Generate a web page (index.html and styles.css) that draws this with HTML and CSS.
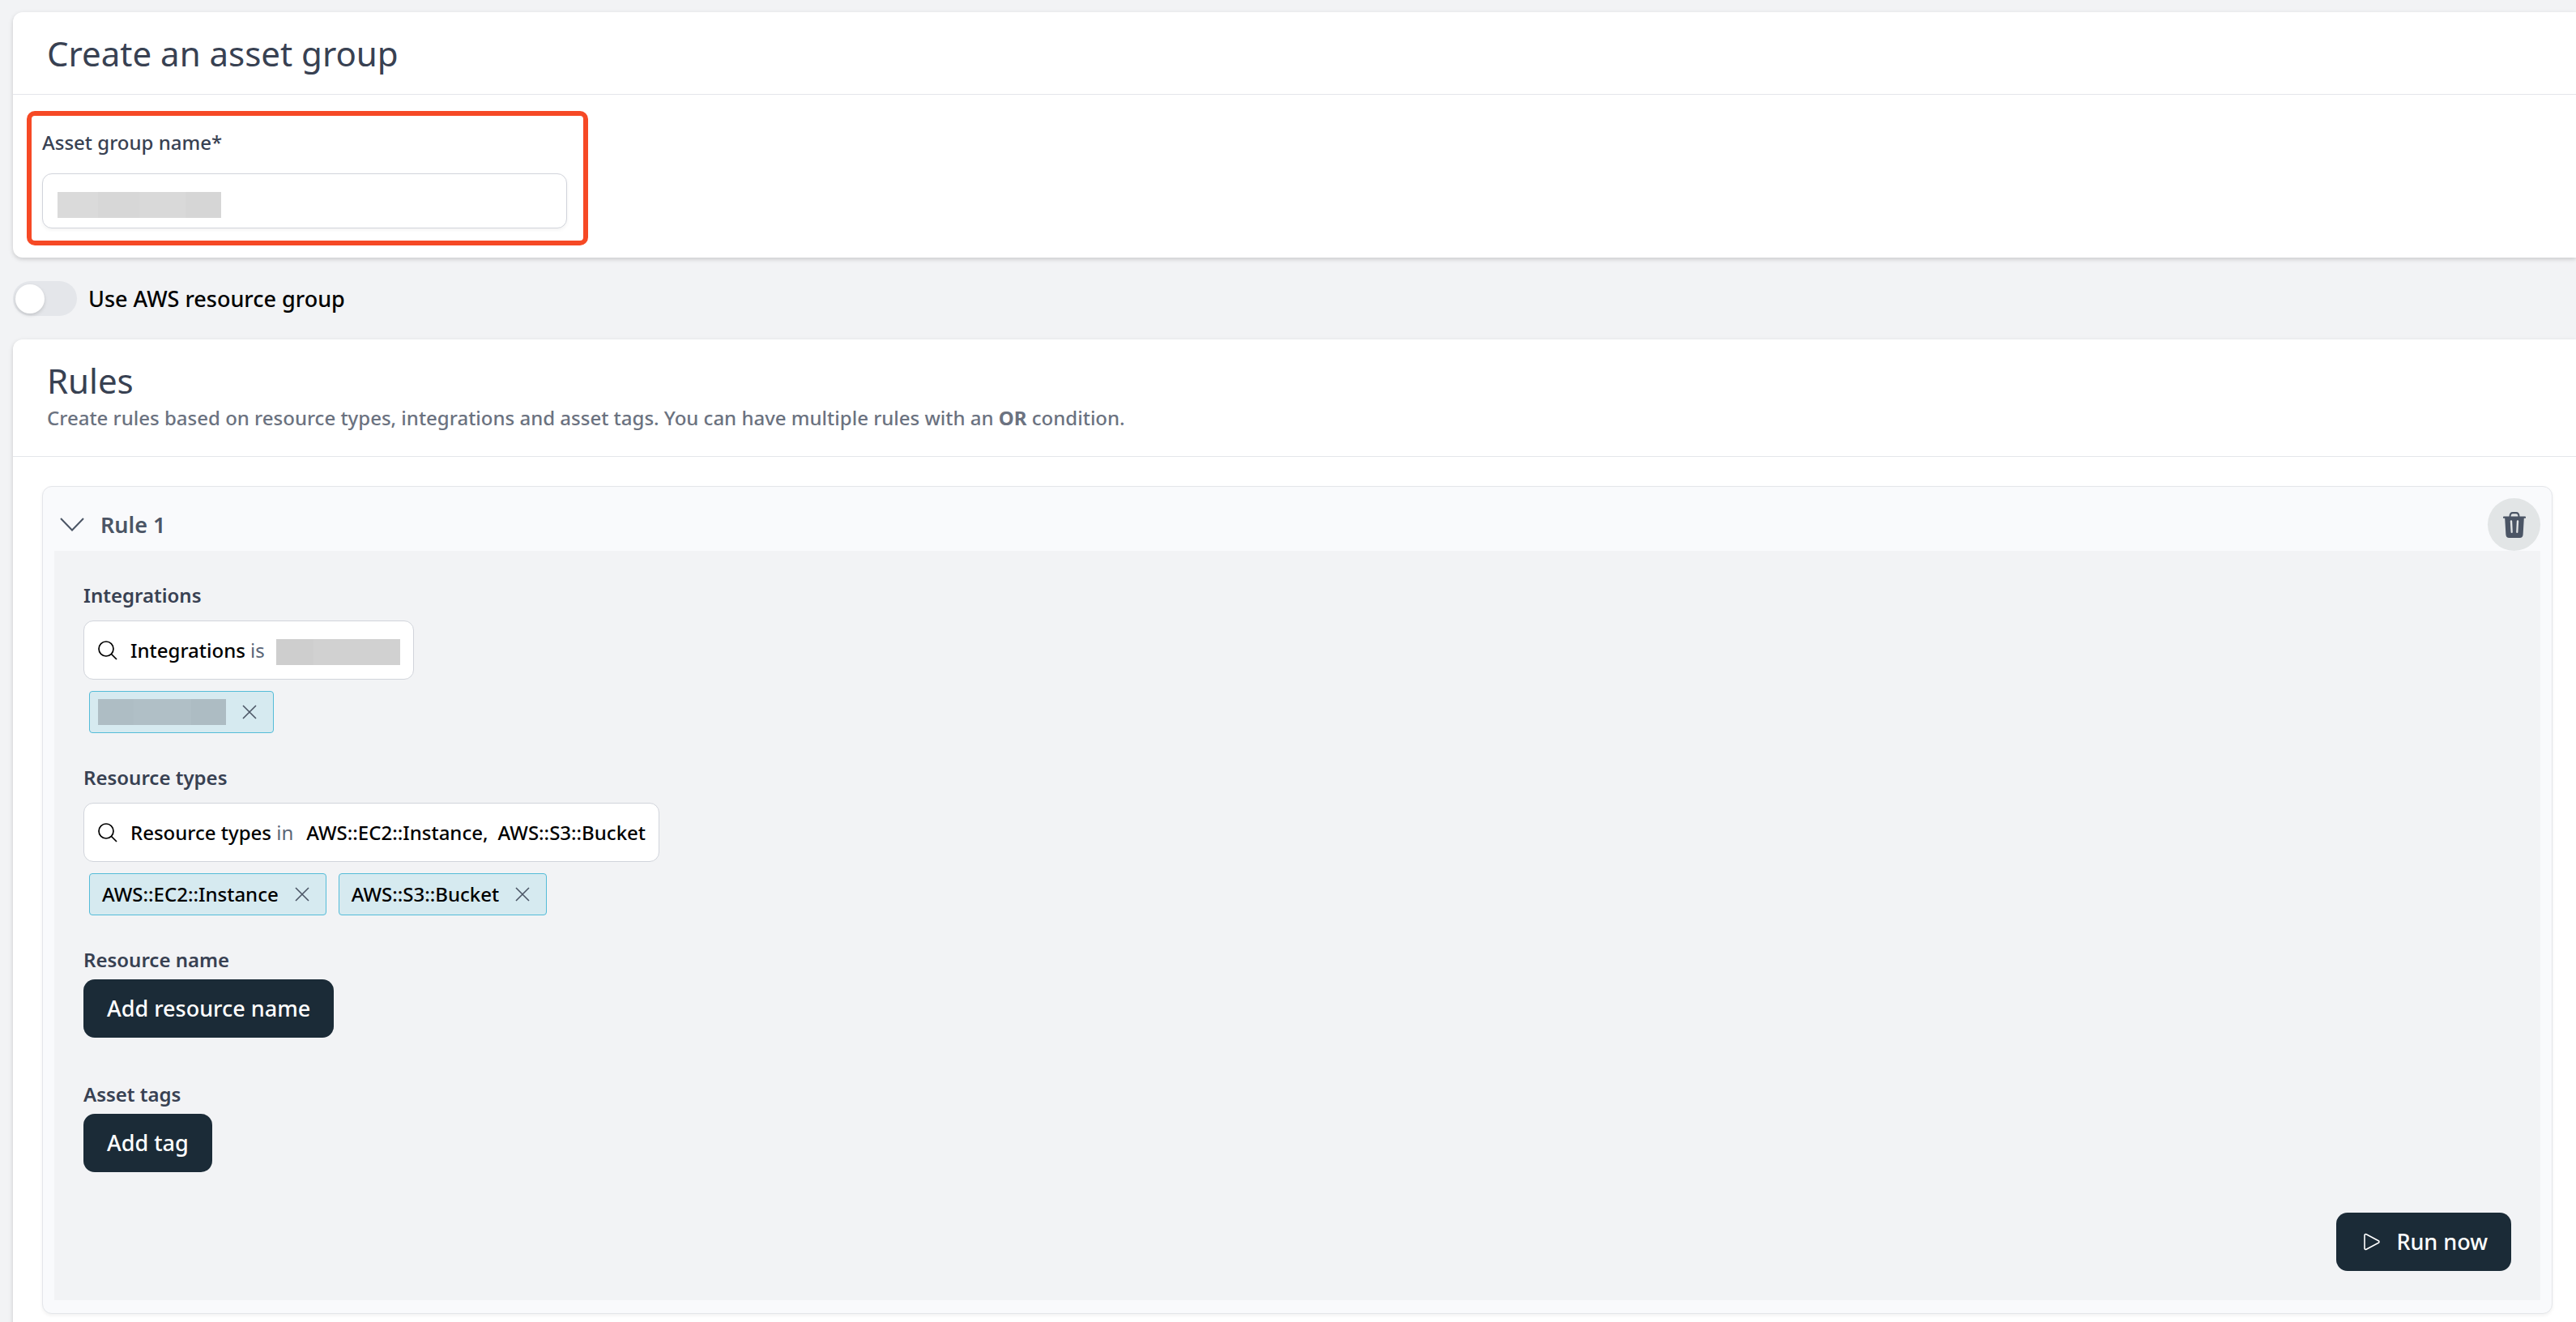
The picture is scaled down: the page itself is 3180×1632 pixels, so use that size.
FILE: index.html
```html
<!DOCTYPE html>
<html lang="en">
<head>
<meta charset="utf-8">
<meta name="viewport" content="width=device-width, initial-scale=1">
<title>Create an asset group</title>
<link rel="stylesheet" href="styles.css">
</head>
<body>
<svg class="sprite" aria-hidden="true">
  <symbol id="icon-search" viewBox="0 0 24 24"><circle cx="10" cy="10" r="9"/><path d="M16.5 16.5 23 23"/></symbol>
  <symbol id="icon-close" viewBox="0 0 18 18"><path d="M1 1l16 16M17 1 1 17"/></symbol>
</svg>
<main class="page">
  <section class="card">
    <header class="card-header">
      <h1 class="title">Create an asset group</h1>
    </header>
    <div class="name-area">
      <div class="highlight">
        <label class="label" for="group-name">Asset group name*</label>
        <div class="text-field">
          <input class="text-input" id="group-name" type="text">
          <span class="redacted redacted-name"></span>
        </div>
      </div>
    </div>
  </section>

  <div class="switch-row">
    <input class="switch" id="use-aws" type="checkbox">
    <label class="switch-label" for="use-aws">Use AWS resource group</label>
  </div>

  <section class="card card-rules">
    <header class="card-header card-header-rules">
      <h2 class="title">Rules</h2>
      <p class="subtitle">Create rules based on resource types, integrations and asset tags. You can have multiple rules with an <strong>OR</strong> condition.</p>
    </header>
    <div class="rules">
      <article class="rule">
        <div class="rule-bar">
          <button class="rule-toggle" type="button" aria-expanded="true">
            <svg class="chevron" viewBox="0 0 32 18"><path d="M2 1 16 15.500 30 1"/></svg>
            Rule 1
          </button>
          <button class="delete" type="button" aria-label="Delete rule">
            <svg class="trash" viewBox="0 0 28 32"><path fill-rule="evenodd" d="M7.500 5.500C7.500 2 9 0 12 0h4c3 0 4.500 2 4.500 5.500H27a1 1 0 0 1 0 2.200h-1.200L24.600 28c-.2 2.600-1.600 4-4 4H7.400c-2.400 0-3.800-1.400-4-4L2.200 7.700H1a1 1 0 0 1 0-2.200zM9.600 5.500h8.800C18.400 3.300 17.500 2.300 16 2.300h-4C10.500 2.300 9.600 3.300 9.600 5.500zM8.800 11.600 9.600 25a1.100 1.100 0 0 0 2.200 0L11.200 11.400a1.200 1.200 0 0 0-2.400.2zM16.800 11.400 16.200 25a1.100 1.100 0 0 0 2.200 0L19.200 11.600a1.200 1.200 0 0 0-2.400-.2z"/></svg>
          </button>
        </div>
        <div class="rule-body">
          <div class="filter">
            <label class="label label-strong" for="integrations">Integrations</label>
            <button class="search" id="integrations" type="button">
              <svg class="search-icon"><use href="#icon-search"/></svg>
              <span>Integrations <span class="operator">is</span></span>
              <span class="redacted redacted-query"></span>
            </button>
            <div class="chips">
              <span class="chip chip-redacted"><span class="redacted redacted-chip"></span><button class="remove" type="button" aria-label="Remove"><svg class="close"><use href="#icon-close"/></svg></button></span>
            </div>
          </div>
          <div class="filter">
            <label class="label label-strong" for="types">Resource types</label>
            <button class="search" id="types" type="button">
              <svg class="search-icon"><use href="#icon-search"/></svg>
              <span>Resource types <span class="operator">in</span></span>
              <span class="values"><span>AWS::EC2::Instance,</span><span>AWS::S3::Bucket</span></span>
            </button>
            <div class="chips">
              <span class="chip">AWS::EC2::Instance<button class="remove" type="button" aria-label="Remove"><svg class="close"><use href="#icon-close"/></svg></button></span>
              <span class="chip">AWS::S3::Bucket<button class="remove" type="button" aria-label="Remove"><svg class="close"><use href="#icon-close"/></svg></button></span>
            </div>
          </div>
          <div class="actions">
            <div class="action">
              <label class="label label-strong" for="add-name">Resource name</label>
              <button class="button" id="add-name" type="button">Add resource name</button>
            </div>
            <div class="action">
              <label class="label label-strong" for="add-tag">Asset tags</label>
              <button class="button" id="add-tag" type="button">Add tag</button>
            </div>
          </div>
          <div class="run">
            <button class="button button-run" type="button">
              <svg class="play" viewBox="0 0 22 22"><path d="M2 3v16a1.500 1.500 0 0 0 2.200 1.300l15-8a1.500 1.500 0 0 0 0-2.600l-15-8A1.500 1.500 0 0 0 2 3z"/></svg>
              Run now
            </button>
          </div>
        </div>
      </article>
    </div>
  </section>
</main>
</body>
</html>
```
FILE: styles.css
```css
* { box-sizing: border-box; }
body {
  margin: 0;
  background: #f2f3f5;
  color: #000;
  font-family: "Noto Sans", "Open Sans", sans-serif;
  font-size: 24px;
  font-weight: 500;
  line-height: 32px;
}
button, input { font: inherit; color: inherit; }
button { cursor: pointer; }
h1, h2, p { margin: 0; }
svg { display: block; flex: none; fill: none; stroke: currentColor; stroke-width: 2; }
.sprite { position: absolute; width: 0; height: 0; }

.page {
  display: flex;
  flex-direction: column;
  min-height: 100vh;
  padding: 15px 0 0 16px;
}
.card {
  background: #fff;
  border-radius: 12px 0 0 12px;
  box-shadow: 0 2px 6px rgba(0, 0, 0, .12), 0 2px 4px rgba(0, 0, 0, .06);
}
.card-rules { flex: 1; border-radius: 12px 0 0 0; }
.card-header {
  padding: 23px 42px 22px;
  border-bottom: 1px solid #e4e6ea;
}
.title { color: #384152; font-size: 42px; font-weight: 400; line-height: 56px; }
.card-header-rules { padding-bottom: 29px; }
.subtitle { color: #6b7280; line-height: 36px; }
.subtitle strong { font-weight: 700; }

.name-area { padding: 20px 17px 15px; }
.highlight {
  width: 693px;
  max-width: 100%;
  padding: 17px 20px 15px 13px;
  border: 6px solid #f64925;
  border-radius: 10px;
}
.label { display: block; color: #384152; }
.label-strong { font-weight: 600; }
.highlight .label { margin-bottom: 22px; }
.text-field { position: relative; }
.text-input {
  display: block;
  width: 100%;
  height: 68px;
  padding: 0 18px;
  background: #fff;
  border: 1px solid #d1d4db;
  border-radius: 12px;
  box-shadow: 0 2px 4px rgba(0, 0, 0, .05);
}
.redacted { display: block; height: 32px; background: linear-gradient(90deg, #cecece 30%, #d1d1d1 30%); }
.redacted-name {
  position: absolute;
  top: 23px;
  left: 19px;
  width: 202px;
  background: linear-gradient(90deg, #dadada 25%, #d7d7d7 25% 50%, #d9d9d9 50% 78%, #d6d6d6 78%);
}
.redacted-query { width: 153px; margin: 5px 0 0 6px; }
.redacted-chip { width: 158px; background: linear-gradient(90deg, #aebdc4 28%, #b0bfc6 28% 73%, #adbcc3 73%); }

.switch-row { display: flex; align-items: center; gap: 14px; padding: 29px 0; }
.switch {
  appearance: none;
  display: grid;
  align-items: center;
  width: 79px;
  height: 43px;
  margin: 0;
  padding: 0 3px;
  background: #e4e6ea;
  border-radius: 22px;
  cursor: pointer;
}
.switch::before {
  content: "";
  width: 36px;
  height: 36px;
  background: #fff;
  border-radius: 50%;
  box-shadow: 0 2px 4px rgba(0, 0, 0, .15);
}
.switch-label { font-size: 27px; }

.rules { padding: 36px 29px 36px 36px; }
.rule {
  padding: 14px 14px 16px;
  background: #f9fafc;
  border: 1px solid #e4e6ea;
  border-radius: 12px;
  box-shadow: 0 2px 4px rgba(0, 0, 0, .06);
}
.rule-bar { display: flex; align-items: center; justify-content: space-between; }
.rule-toggle {
  display: flex;
  align-items: center;
  gap: 19px;
  padding: 0 6px;
  background: none;
  border: 0;
  color: #4b5565;
  font-size: 27px;
  font-weight: 600;
}
.chevron { width: 32px; height: 18px; }
.delete {
  display: grid;
  place-items: center;
  width: 65px;
  height: 65px;
  padding: 0;
  background: #e2e5e6;
  border: 0;
  border-radius: 50%;
  color: #4b5565;
}
.trash { width: 28px; height: 32px; fill: currentColor; stroke: none; }

.rule-body { padding: 39px 36px 36px; background: #f2f3f5; }
.filter { margin-bottom: 39px; }
.search {
  display: flex;
  align-items: center;
  gap: 8px;
  height: 73px;
  margin: 15px 0 14px;
  padding: 0 16px 0 17px;
  background: #fff;
  border: 1px solid #d1d4db;
  border-radius: 12px;
}
.search-icon { width: 24px; height: 24px; margin-right: 8px; stroke-width: 1.7; }
.operator { color: #5b6678; font-weight: 400; }
.values { display: flex; gap: 12px; padding-left: 8px; }
.chips { display: flex; gap: 15px; padding-left: 7px; }
.chip {
  display: flex;
  align-items: center;
  gap: 20px;
  height: 52px;
  padding: 0 20px 0 15px;
  background: #d6eaf0;
  border: 1px solid #54bcd8;
  border-radius: 4px;
}
.chip-redacted { padding: 0 20px 0 10px; }
.remove { padding: 0; background: none; border: 0; color: #4b5565; }
.close { width: 18px; height: 18px; stroke-width: 1.6; }

.actions { display: grid; gap: 54px; margin-bottom: 50px; }
.action .label { margin-bottom: 8px; }
.button {
  display: flex;
  align-items: center;
  gap: 19px;
  height: 72px;
  padding: 0 29px;
  background: #1b2b37;
  border: 0;
  border-radius: 14px;
  color: #fff;
  font-size: 27px;
}
.run { display: flex; justify-content: flex-end; }
.button-run { padding-left: 33px; }
.play { width: 22px; height: 22px; stroke-width: 1.6; }
```
